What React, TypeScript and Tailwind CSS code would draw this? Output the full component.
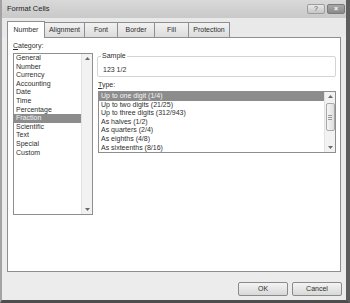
import React from "react";

const categories = [
  "General",
  "Number",
  "Currency",
  "Accounting",
  "Date",
  "Time",
  "Percentage",
  "Fraction",
  "Scientific",
  "Text",
  "Special",
  "Custom",
];

const types = [
  "Up to one digit (1/4)",
  "Up to two digits (21/25)",
  "Up to three digits (312/943)",
  "As halves (1/2)",
  "As quarters (2/4)",
  "As eighths (4/8)",
  "As sixteenths (8/16)",
];

const tabs = [
  { label: "Number", w: "w-[38px]" },
  { label: "Alignment", w: "w-[41px]" },
  { label: "Font", w: "w-[34px]" },
  { label: "Border", w: "w-[38px]" },
  { label: "Fill", w: "w-[35px]" },
  { label: "Protection", w: "w-[42px]" },
];

const Arrow = ({ up }: { up?: boolean }) => (
  <svg width="5" height="3" viewBox="0 0 5 3">
    <path d={up ? "M0 3h5L2.5 0z" : "M0 0h5L2.5 3z"} fill="#6a6a6a" />
  </svg>
);

const ListBox = ({
  items,
  selected,
  className,
  thumb,
}: {
  items: string[];
  selected: number;
  className: string;
  thumb?: boolean;
}) => (
  <div className={`flex border border-[#8e8e8e] bg-white ${className}`}>
    <div className="flex-1 flex flex-col">
      {items.map((item, i) => (
        <div
          key={item}
          className={`h-[8.6px] leading-[8.6px] pl-[2px] whitespace-nowrap ${
            i === selected ? "bg-[#8c8c8c] text-[#f4f4f4]" : ""
          }`}
        >
          {item}
        </div>
      ))}
    </div>
    <div className="w-[11px] flex flex-col items-center bg-[#f2f2f2] border-l border-[#e2e2e2]">
      <div className="h-[9px] flex items-center justify-center">
        <Arrow up />
      </div>
      {thumb && (
        <div className="mt-[2px] h-[28px] w-[9px] rounded-[2px] border border-[#a9a9a9] bg-gradient-to-r from-[#f6f6f6] to-[#dedede] flex flex-col items-center justify-center gap-[1px]">
          <div className="w-[4px] h-px bg-[#9a9a9a]" />
          <div className="w-[4px] h-px bg-[#9a9a9a]" />
          <div className="w-[4px] h-px bg-[#9a9a9a]" />
        </div>
      )}
      <div className="flex-1" />
      <div className="h-[9px] flex items-center justify-center">
        <Arrow />
      </div>
    </div>
  </div>
);

export default function App() {
  return (
    <div className="w-[350px] h-[303px] flex flex-col bg-[#ececec] border-l-2 border-r-[4px] border-b-[3px] border-l-[#a3a3a3] border-r-[#5e5e5e] border-b-[#4e4e4e] font-['Liberation_Sans',Arial,sans-serif] text-[7px] text-[#2e2e2e] overflow-hidden">
      {/* title bar */}
      <div className="h-[18px] flex items-center justify-between pl-[5px] pr-[1px] bg-gradient-to-b from-[#d9d9d9] to-[#c9c9c9]">
        <span className="text-[7.5px] text-[#1e1e1e]">Format Cells</span>
        <div className="flex gap-[2px] -mt-[1px]">
          <div className="w-[18px] h-[10px] rounded-[2px] border border-[#9c9c9c] bg-gradient-to-b from-[#e8e8e8] to-[#c6c6c6] flex items-center justify-center text-[7px] leading-none text-[#555]">
            ?
          </div>
          <div className="w-[18px] h-[10px] rounded-[2px] border border-[#7a7a7a] bg-gradient-to-b from-[#a8a8a8] to-[#8a8a8a] flex items-center justify-center text-[7px] leading-none text-white font-bold">
            ×
          </div>
        </div>
      </div>

      {/* tabs */}
      <div className="h-[19px] flex items-end pl-[5px] bg-[#e9e9e9]">
        {tabs.map((t, i) => (
          <div
            key={t.label}
            className={`${t.w} flex items-center justify-center border border-b-0 border-[#8e8e8e] ${
              i === 0
                ? "h-[17px] bg-white relative z-10 -mb-px"
                : "h-[15px] -ml-px first:ml-0 bg-gradient-to-b from-[#f2f2f2] to-[#dcdcdc]"
            }`}
          >
            {t.label}
          </div>
        ))}
      </div>

      {/* content panel */}
      <div className="ml-[5px] w-[334px] h-[235px] bg-white border border-[#8e8e8e] flex">
        <div className="ml-[5px] w-[80px] flex flex-col pt-[3px]">
          <div className="h-[9px] leading-[9px]">
            <span className="underline">C</span>ategory:
          </div>
          <ListBox items={categories} selected={7} className="mt-[3px] h-[162px]" />
        </div>

        <div className="ml-[4px] w-[239px] flex flex-col">
          <div className="relative mt-[18px] h-[21px] border border-[#d4d4d4] rounded-[2px]">
            <span className="absolute -top-[5px] left-[3px] bg-white px-[1px] leading-[8px]">
              Sample
            </span>
            <div className="pl-[5px] pt-[8px] leading-[9px]">123 1/2</div>
          </div>
          <div className="mt-[3px] h-[9px] leading-[9px] pl-[1px]">
            <span className="underline">T</span>ype:
          </div>
          <ListBox
            items={types}
            selected={0}
            thumb
            className="mt-[2px] ml-[1px] h-[62px]"
          />
        </div>
      </div>

      {/* buttons */}
      <div className="flex-1 flex justify-end items-start pt-[10px] pr-[4px] gap-[4px]">
        <div className="w-[50px] h-[14px] rounded-[2px] border border-[#8a8a8a] bg-gradient-to-b from-[#f4f4f4] to-[#d8d8d8] flex items-center justify-center">
          OK
        </div>
        <div className="w-[50px] h-[14px] rounded-[2px] border border-[#8a8a8a] bg-gradient-to-b from-[#f4f4f4] to-[#d8d8d8] flex items-center justify-center">
          Cancel
        </div>
      </div>
    </div>
  );
}
